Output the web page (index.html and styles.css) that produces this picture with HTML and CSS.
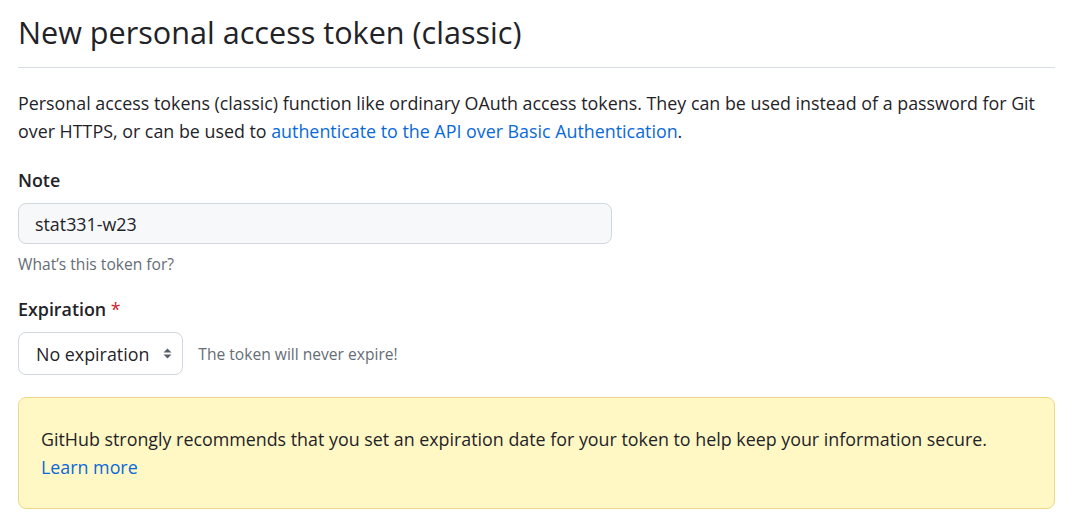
FILE: index.html
```html
<!DOCTYPE html>
<html lang="en">
<head>
<meta charset="utf-8">
<title>New personal access token (classic)</title>
<link rel="stylesheet" href="styles.css">
</head>
<body>
<main class="page">
  <div class="subhead">
    <h1 class="subhead-heading">New personal access token (classic)</h1>
  </div>
  <p class="intro">Personal access tokens (classic) function like ordinary OAuth access tokens. They can be used instead of a password for Git over HTTPS, or can be used to <a href="#" class="link">authenticate to the API over Basic Authentication</a>.</p>

  <div class="form-group">
    <label class="form-label" for="note">Note</label>
    <input class="form-input" id="note" type="text" value="stat331-w23">
    <p class="note-hint">What’s this token for?</p>
  </div>

  <div class="form-group expiration">
    <label class="form-label" for="exp">Expiration <span class="required">*</span></label>
    <div class="select-row">
      <div class="select" id="exp">
        <span class="select-text">No expiration</span>
        <svg class="select-arrows" width="9" height="11" viewBox="0 0 9 11" aria-hidden="true"><path d="M4.5 0.5 L8.5 4.5 H0.5 Z M0.5 6.5 H8.5 L4.5 10.5 Z" fill="#57606a"/></svg>
      </div>
      <span class="select-hint">The token will never expire!</span>
    </div>
  </div>

  <div class="flash-warn">
    GitHub strongly recommends that you set an expiration date for your token to help keep your information secure.
    <a href="#" class="link">Learn more</a>
  </div>
</main>
</body>
</html>
```

FILE: styles.css
```css
* { box-sizing: border-box; }
body {
  margin: 0;
  background: #ffffff;
  color: #1f2328;
  font-family: "Open Sans", "Noto Sans", sans-serif;
  font-size: 17.85px;
  line-height: 28px;
}
.page {
  width: 1055px;
  padding: 12px 0 0 18px;
}
.subhead {
  border-bottom: 1px solid #d8dee4;
  padding-bottom: 15px;
}
.subhead-heading {
  margin: 0;
  font-size: 30.6px;
  font-weight: 400;
  line-height: 40px;
}
.intro { margin: 21px 0 21px; }
.link { color: #0969da; text-decoration: none; }
.form-group { display: flex; flex-direction: column; align-items: flex-start; }
.form-label { font-weight: 600; margin-bottom: 9px; }
.form-input {
  width: 594px;
  height: 41px;
  padding: 0 16px;
  font: inherit;
  color: #1f2328;
  background: #f6f8fa;
  border: 1px solid #d0d7de;
  border-radius: 8px;
}
.note-hint {
  margin: 8px 0 0;
  font-size: 15.6px;
  line-height: 24px;
  color: #656d76;
}
.expiration { margin-top: 19px; }
.required { color: #cf222e; font-weight: 400; }
.select-row { display: flex; align-items: center; gap: 15px; }
.select {
  display: flex;
  align-items: center;
  gap: 14px;
  height: 43px;
  padding: 0 10px 0 17px;
  border: 1px solid #d0d7de;
  border-radius: 8px;
  background: #ffffff;
}
.select-hint { font-size: 15.6px; color: #656d76; }
.flash-warn {
  margin-top: 22px;
  padding: 27px 22px;
  background: #fff8c5;
  border: 1px solid #eed888;
  border-radius: 8px;
}
```
